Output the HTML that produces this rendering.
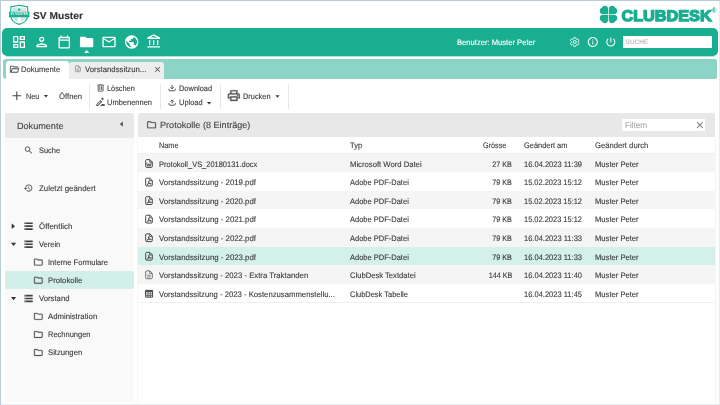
<!DOCTYPE html><html lang="de"><head><meta charset="utf-8"><title>SV Muster - ClubDesk</title><style>
html,body{margin:0;padding:0}
body{width:720px;height:405px;overflow:hidden;background:#fff;position:relative;font-family:"Liberation Sans",sans-serif}
#app{position:absolute;left:0;top:0;width:720px;height:405px;will-change:transform}
.b{position:absolute}
.t{position:absolute;white-space:nowrap;display:block;text-rendering:geometricPrecision;-webkit-text-stroke:0.12px currentColor}
.i{position:absolute;display:block;overflow:visible}

</style></head><body><div id="app">
<div class="b" style="left:0px;top:0px;width:720.00px;height:1.30px;background:#b9ccd5;"></div>
<div class="b" style="left:0px;top:0px;width:1.20px;height:405.00px;background:#b9ced8;"></div>
<div class="b" style="left:718.6px;top:1px;width:1.40px;height:404.00px;background:#e3eef0;"></div>
<div class="b" style="left:1px;top:403.7px;width:719.00px;height:1.30px;background:#e2eef1;"></div>
<svg class="i" style="left:8px;top:4px" width="24" height="23"><g transform="translate(0 0)">
<path d="M11.200 1.200 L19.650 2.900 V11.200 C19.650 15.700 16.300 18.900 11.200 20.400 C6.100 18.900 2.750 15.700 2.750 11.200 V2.900 Z" fill="#fff" stroke="#1aae91" stroke-width="1.100" stroke-linejoin="round"/>
<path d="M4.300 4.300 L9.700 3.200 V18.300 C6.400 17 4.300 14.500 4.300 11.200 Z" fill="#c5e9e0"/>
<path d="M12.700 3.200 L18.100 4.300 V11.200 C18.100 14.500 16 17 12.700 18.300 Z" fill="#e4e4e4"/>
<rect x="10.100" y="4.500" width="2.300" height="2.300" fill="#1aae91"/>
<path d="M.7 7.750 H21.700 L21.200 10.450 L21.700 13.150 H.7 L1.200 10.450 Z" fill="#1aae91"/>
<text x="11.200" y="11.400" font-size="2.600" font-weight="700" fill="#fff" fill-opacity=".92" text-anchor="middle" font-family="Liberation Sans, sans-serif" textLength="17.200" lengthAdjust="spacingAndGlyphs">SV MUSTER</text>
</g></svg>
<span class="t" style="font-size:10px;line-height:13px;top:10px;color:#333;font-weight:700;left:33.20px;transform-origin:0 50%;transform:scaleX(1.0204);">SV Muster</span>
<svg class="i" style="left:599px;top:5px" width="20" height="20" fill="#1aae91"><g transform="translate(9.5 9.4)">
<path id="lf" d="M-.35 -.35L-.35 -5.400C-.35 -7.600 -1.800 -8.750 -3.500 -8.750C-4.900 -8.750 -6.100 -8 -6.750 -6.750C-8 -6.100 -8.750 -4.900 -8.750 -3.500C-8.750 -1.800 -7.600 -.35 -5.400 -.35Z"/>
<path d="M-.35 -.35L-.35 -5.400C-.35 -7.600 -1.800 -8.750 -3.500 -8.750C-4.900 -8.750 -6.100 -8 -6.750 -6.750C-8 -6.100 -8.750 -4.900 -8.750 -3.500C-8.750 -1.800 -7.600 -.35 -5.400 -.35Z" transform="scale(-1 1)"/>
<path d="M-.35 -.35L-.35 -5.400C-.35 -7.600 -1.800 -8.750 -3.500 -8.750C-4.900 -8.750 -6.100 -8 -6.750 -6.750C-8 -6.100 -8.750 -4.900 -8.750 -3.500C-8.750 -1.800 -7.600 -.35 -5.400 -.35Z" transform="scale(1 -1)"/>
<path d="M-.35 -.35L-.35 -5.400C-.35 -7.600 -1.800 -8.750 -3.500 -8.750C-4.900 -8.750 -6.100 -8 -6.750 -6.750C-8 -6.100 -8.750 -4.900 -8.750 -3.500C-8.750 -1.800 -7.600 -.35 -5.400 -.35Z" transform="scale(-1 -1)"/>
</g></svg>
<svg class="i" style="left:618px;top:3px" width="103" height="23"><g transform="translate(0 0)"><text x="3.400" y="17.500" font-family="Liberation Sans, sans-serif" font-weight="700" font-size="15.500" fill="#1aae91" stroke="#1aae91" stroke-width="1.300" stroke-linejoin="miter" textLength="90.300" lengthAdjust="spacingAndGlyphs" style="text-rendering:geometricPrecision">CLUBDESK</text><text x="93.800" y="10.300" font-family="Liberation Sans, sans-serif" font-weight="700" font-size="6.500" fill="#1aae91">®</text></g></svg>
<div class="b" style="left:2.2px;top:28px;width:715.50px;height:28.20px;background:#1aae91;border-radius:5px;"></div>
<div class="b" style="left:6px;top:56px;width:708.00px;height:1.00px;background:rgba(26,174,145,.35);"></div>
<svg class="i" style="left:11px;top:34px" width="17" height="17" fill="#fff"><g transform="translate(0 0) scale(0.667)"><path d="M19 5v2h-4V5h4M9 5v6H5V5h4m10 8v6h-4v-6h4M9 17v2H5v-2h4M21 3h-8v6h8V3zM11 3H3v10h8V3zm10 8h-8v10h8V11zm-10 4H3v6h8v-6z"/></g></svg>
<svg class="i" style="left:33px;top:34px" width="18" height="17" fill="#fff"><g transform="translate(0.7 0) scale(0.667)"><path d="M12 6c1.1 0 2 .9 2 2s-.9 2-2 2-2-.9-2-2 .9-2 2-2m0 10c2.7 0 5.800 1.290 6 2H6c.23-.72 3.310-2 6-2m0-12C9.790 4 8 5.790 8 8s1.790 4 4 4 4-1.790 4-4-1.790-4-4-4zm0 10c-2.670 0-8 1.340-8 4v2h16v-2c0-2.660-5.330-4-8-4z"/></g></svg>
<svg class="i" style="left:56px;top:34px" width="17" height="17" fill="#fff"><g transform="translate(0.55 0.3) scale(0.642)"><path d="M5 22q-.825 0-1.413-.587Q3 20.825 3 20V6q0-.825.587-1.412Q4.175 4 5 4h1V2h2v2h8V2h2v2h1q.825 0 1.413.588Q21 5.175 21 6v14q0 .825-.587 1.413Q19.825 22 19 22Zm0-2h14V10H5v10ZM5 8h14V6H5Z"/></g></svg>
<svg class="i" style="left:78px;top:34px" width="18" height="17" fill="#fff"><g transform="translate(0.6 0) scale(0.667)"><path d="M10 4H4c-1.100 0-1.990.9-1.990 2L2 18c0 1.100.9 2 2 2h16c1.100 0 2-.9 2-2V8c0-1.100-.9-2-2-2h-8l-2-2z"/></g></svg>
<svg class="i" style="left:101px;top:34px" width="17" height="17" fill="#fff"><g transform="translate(0 0) scale(0.667)"><path d="M20 4H4c-1.100 0-1.990.9-1.990 2L2 18c0 1.100.9 2 2 2h16c1.100 0 2-.9 2-2V6c0-1.100-.9-2-2-2zm0 14H4V8l8 5 8-5v10zm-8-7L4 6h16l-8 5z"/></g></svg>
<svg class="i" style="left:123px;top:34px" width="18" height="17" fill="#fff"><g transform="translate(0.7 0) scale(0.667)"><path d="M12 2C6.480 2 2 6.480 2 12s4.480 10 10 10 10-4.480 10-10S17.520 2 12 2zm-1 17.930c-3.950-.49-7-3.850-7-7.930 0-.62.080-1.210.210-1.790L9 15v1c0 1.100.9 2 2 2v1.930zm6.900-2.540c-.26-.81-1-1.390-1.900-1.390h-1v-3c0-.55-.45-1-1-1H8v-2h2c.55 0 1-.45 1-1V7h2c1.100 0 2-.9 2-2v-.41c2.930 1.190 5 4.060 5 7.410 0 2.080-.8 3.970-2.100 5.390z"/></g></svg>
<svg class="i" style="left:146px;top:33px" width="17" height="18" fill="#fff"><g transform="translate(0 0.6) scale(0.667)"><path d="M6.500 10h-2v7h2v-7zm6 0h-2v7h2v-7zm8.500 9H2v2h19v-2zm-2.500-9h-2v7h2v-7zm-7-6.740L16.710 6H6.290l5.210-2.740m0-2.260L2 6v2h19V6l-9.500-5z"/></g></svg>
<svg class="i" style="left:84px;top:50px" width="7" height="4"><g transform="translate(0.2 0)"><path d="M0 3 L2.500 0 L5 3Z" fill="#fff"/></g></svg>
<span class="t" style="font-size:8px;line-height:10px;top:38px;color:#fff;left:456.70px;transform-origin:0 50%;transform:scaleX(0.9519);">Benutzer: Muster Peter</span>
<svg class="i" style="left:568px;top:36px" width="14" height="13" fill="#fff"><g transform="translate(0.7 0) scale(0.5)"><path d="M19.430 12.980c.04-.32.070-.64.070-.98 0-.34-.03-.66-.07-.98l2.110-1.650c.19-.15.240-.42.120-.64l-2-3.460c-.09-.16-.26-.25-.44-.25-.06 0-.12.010-.17.030l-2.490 1c-.52-.4-1.080-.73-1.690-.98l-.38-2.650C14.460 2.180 14.250 2 14 2h-4c-.25 0-.46.180-.49.420l-.38 2.650c-.61.250-1.170.590-1.690.980l-2.490-1c-.06-.02-.12-.03-.18-.03-.17 0-.34.090-.43.250l-2 3.460c-.13.220-.07.490.12.640l2.110 1.650c-.04.320-.07.650-.07.980 0 .33.030.66.070.98l-2.110 1.650c-.19.150-.24.420-.12.640l2 3.460c.09.160.26.250.44.250.06 0 .12-.01.17-.03l2.490-1c.52.4 1.080.73 1.690.98l.38 2.650c.03.240.24.420.49.420h4c.25 0 .46-.18.490-.42l.38-2.650c.61-.25 1.170-.59 1.690-.98l2.490 1c.06.020.12.030.18.030.17 0 .34-.09.43-.25l2-3.460c.12-.22.070-.49-.12-.64l-2.110-1.650z" fill="none" stroke="#fff" stroke-width="1.900" transform="translate(12 12) scale(.88) translate(-12 -12)"/><circle cx="12" cy="12" r="3" fill="none" stroke="#fff" stroke-width="1.900"/></g></svg>
<svg class="i" style="left:586px;top:36px" width="14" height="13" fill="#fff"><g transform="translate(0.8 0) scale(0.5)"><path d="M11 7h2v2h-2zm0 4h2v6h-2zm1-9C6.480 2 2 6.480 2 12s4.480 10 10 10 10-4.480 10-10S17.520 2 12 2zm0 18c-4.410 0-8-3.590-8-8s3.590-8 8-8 8 3.590 8 8-3.590 8-8 8z"/></g></svg>
<svg class="i" style="left:604px;top:36px" width="14" height="13" fill="#fff"><g transform="translate(0.8 0) scale(0.5)"><path d="M13 3h-2v10h2V3zm4.830 2.170l-1.420 1.420C17.990 7.860 19 9.810 19 12c0 3.870-3.130 7-7 7s-7-3.130-7-7c0-2.190 1.010-4.140 2.580-5.420L6.170 5.170C4.230 6.820 3 9.260 3 12c0 4.970 4.030 9 9 9s9-4.030 9-9c0-2.740-1.230-5.180-3.170-6.830z"/></g></svg>
<div class="b" style="left:623px;top:35.6px;width:89.00px;height:12.80px;background:#fff;"></div>
<span class="t" style="font-size:6.5px;line-height:8px;top:39px;color:#b5b5b5;left:625.60px;transform-origin:0 50%;">SUCHE</span>
<div class="b" style="left:3px;top:58.8px;width:714.00px;height:20.10px;background:#8cd4c5;border-radius:3px 2px 2px 3px;"></div>
<div class="b" style="left:5.6px;top:61px;width:63.40px;height:18.20px;background:#fff;border-radius:3px 3px 0 0;"></div>
<div class="b" style="left:69.3px;top:61.8px;width:94.50px;height:17.00px;background:#ededed;border-radius:3px 3px 0 0;"></div>
<svg class="i" style="left:9px;top:63px" width="12" height="13" fill="#555" stroke="#555" stroke-width="0.15" stroke-linejoin="round"><g transform="translate(0.05 0.95) scale(0.438)"><path d="M4 20q-.825 0-1.412-.587Q2 18.825 2 18V6q0-.825.588-1.412Q3.175 4 4 4h6l2 2h8q.825 0 1.413.588Q22 7.175 22 8H11.175l-2-2H4v12l2.400-8h17.100l-2.575 8.575q-.2.650-.737 1.038Q19.650 20 19 20Zm2.100-2H19l1.800-6H7.900Z"/></g></svg>
<span class="t" style="font-size:8px;line-height:10px;top:65px;color:#3a3a3a;left:20.90px;transform-origin:0 50%;transform:scaleX(0.9582);">Dokumente</span>
<svg class="i" style="left:75px;top:65px" width="7" height="9" stroke="#8a8a8a"><g transform="translate(0 0.3) scale(0.753 0.773)"><path d="M1.600 .5H4.800L7.200 2.900V7.300a1 1 0 0 1-1 1H1.600a1 1 0 0 1-1-1V1.500a1 1 0 0 1 1-1Z" fill="none" stroke-width="1"/><path d="M4.600 .7V3.100H7M2.100 4.800H5.600M2.100 6.500H5.600" fill="none" stroke-width=".9"/></g></svg>
<span class="t" style="font-size:8px;line-height:10px;top:65px;color:#3a3a3a;left:85.00px;transform-origin:0 50%;transform:scaleX(0.9708);">Vorstandssitzun...</span>
<svg class="i" style="left:153px;top:65px" width="10" height="10" fill="#444"><g transform="translate(0.1 0) scale(0.367)"><path d="M19 6.410L17.590 5 12 10.590 6.410 5 5 6.410 10.590 12 5 17.590 6.410 19 12 13.410 17.590 19 19 17.590 13.410 12z"/></g></svg>
<div class="b" style="left:89.3px;top:83.5px;width:1.00px;height:25.80px;background:#e6e6e6;"></div>
<div class="b" style="left:160.0px;top:83.5px;width:1.00px;height:25.80px;background:#e6e6e6;"></div>
<div class="b" style="left:219.7px;top:83.5px;width:1.00px;height:25.80px;background:#e6e6e6;"></div>
<div class="b" style="left:288.4px;top:83.5px;width:1.00px;height:25.80px;background:#e6e6e6;"></div>
<svg class="i" style="left:12px;top:91px" width="11" height="11"><g transform="translate(0.5 0.5)"><path d="M4.300 0V8.600M0 4.300H8.600" stroke="#444" stroke-width="1.100" fill="none"/></g></svg>
<span class="t" style="font-size:8px;line-height:10px;top:92px;color:#3a3a3a;left:25.70px;transform-origin:0 50%;transform:scaleX(0.8994);">Neu</span>
<svg class="i" style="left:43px;top:94px" width="6" height="5"><g transform="translate(0.8 0.9)"><path d="M0 0H4.2L2.1 2.6Z" fill="#3a3a3a"/></g></svg>
<span class="t" style="font-size:8px;line-height:10px;top:92px;color:#3a3a3a;left:59.00px;transform-origin:0 50%;transform:scaleX(0.9635);">Öffnen</span>
<svg class="i" style="left:95px;top:83px" width="12" height="11" fill="#555" stroke="#555" stroke-width="0.2" stroke-linejoin="round"><g transform="translate(0.7 0) scale(0.408)"><path d="M7 21q-.825 0-1.412-.587Q5 19.825 5 19V6H4V4h5V3h6v1h5v2h-1v13q0 .825-.587 1.413Q17.825 21 17 21ZM17 6H7v13h10ZM9 17h2V8H9Zm4 0h2V8h-2Z"/></g></svg>
<span class="t" style="font-size:8px;line-height:10px;top:84px;color:#3a3a3a;left:107.10px;transform-origin:0 50%;transform:scaleX(0.9191);">Löschen</span>
<svg class="i" style="left:94px;top:96px" width="14" height="13" fill="#555"><g transform="translate(0.9 0.6) scale(0.467)"><path d="M15 16l-4 4h10v-4h-6zm-2.940-8.810L3 16.250V20h3.750l9.060-9.060-3.750-3.750zM5.920 18H5v-.92l7.060-7.060.92.920L5.920 18zm12.790-11.960a.996.996 0 000-1.410l-2.340-2.340a1.001 1.001 0 00-1.410 0l-1.830 1.830 3.750 3.750 1.830-1.830z"/></g></svg>
<span class="t" style="font-size:8px;line-height:10px;top:98px;color:#3a3a3a;left:107.10px;transform-origin:0 50%;transform:scaleX(0.9368);">Umbenennen</span>
<svg class="i" style="left:168px;top:85px" width="9" height="8" fill="none" stroke="#505050" stroke-width=".95" stroke-linejoin="round"><g transform="translate(0.5 0)"><path d="M3.650 0V3.700M1.850 2.100L3.650 3.900L5.450 2.100M.5 3.700V4.800a1 1 0 0 0 1 1H5.800a1 1 0 0 0 1-1V3.700"/></g></svg>
<span class="t" style="font-size:8px;line-height:10px;top:84px;color:#3a3a3a;left:178.80px;transform-origin:0 50%;transform:scaleX(0.9303);">Download</span>
<svg class="i" style="left:168px;top:99px" width="9" height="8" fill="none" stroke="#505050" stroke-width=".95" stroke-linejoin="round"><g transform="translate(0.5 0.4)"><path d="M3.650 .6V4.200M1.850 2.300L3.650 .5L5.450 2.300M.5 3.700V4.800a1 1 0 0 0 1 1H5.800a1 1 0 0 0 1-1V3.700"/></g></svg>
<span class="t" style="font-size:8px;line-height:10px;top:98px;color:#3a3a3a;left:178.80px;transform-origin:0 50%;transform:scaleX(0.9309);">Upload</span>
<svg class="i" style="left:207px;top:102px" width="6" height="4"><g transform="translate(0 0)"><path d="M0 0H4.2L2.1 2.6Z" fill="#3a3a3a"/></g></svg>
<svg class="i" style="left:226px;top:88px" width="17" height="16" fill="#555" stroke="#555" stroke-width="0.4" stroke-linejoin="round"><g transform="translate(0.6 0.35) scale(0.604)"><path d="M19 8h-1V3H6v5H5c-1.660 0-3 1.340-3 3v6h4v4h12v-4h4v-6c0-1.660-1.340-3-3-3zM8 5h8v3H8V5zm8 12v2H8v-4h8v2zm2-2v-2H6v2H4v-4c0-.55.450-1 1-1h14c.55 0 1 .450 1 1v4h-2z"/><circle cx="18" cy="11.500" r="1"/></g></svg>
<span class="t" style="font-size:8px;line-height:10px;top:92px;color:#3a3a3a;left:242.90px;transform-origin:0 50%;transform:scaleX(0.9231);">Drucken</span>
<svg class="i" style="left:275px;top:95px" width="6" height="4"><g transform="translate(0.4 0.2)"><path d="M0 0H4.2L2.1 2.6Z" fill="#3a3a3a"/></g></svg>
<div class="b" style="left:5.3px;top:113.3px;width:128.70px;height:289.00px;background:#f9f9f9;border-radius:2px 2px 0 0;"></div>
<div class="b" style="left:5.3px;top:113.3px;width:128.70px;height:24.30px;background:#e8e8e8;border-radius:2px;"></div>
<span class="t" style="font-size:9px;line-height:11px;top:121px;color:#444;left:17.30px;transform-origin:0 50%;transform:scaleX(1.0103);">Dokumente</span>
<svg class="i" style="left:119px;top:121px" width="5" height="7"><g transform="translate(0.9 0.4)"><path d="M2.900 0V5.300L0 2.650Z" fill="#505050"/></g></svg>
<svg class="i" style="left:23px;top:145px" width="12" height="11" fill="#555" stroke="#555" stroke-width="0.3" stroke-linejoin="round"><g transform="translate(0.7 0.2) scale(0.408)"><path d="M15.500 14h-.79l-.28-.27C15.410 12.590 16 11.110 16 9.500 16 5.910 13.090 3 9.500 3S3 5.910 3 9.500 5.910 16 9.500 16c1.610 0 3.090-.59 4.230-1.570l.27.28v.79l5 4.990L20.490 19l-4.990-5zm-6 0C7.010 14 5 11.990 5 9.500S7.010 5 9.500 5 14 7.010 14 9.500 11.990 14 9.500 14z"/></g></svg>
<span class="t" style="font-size:8px;line-height:10px;top:146px;color:#3a3a3a;left:38.90px;transform-origin:0 50%;transform:scaleX(0.9302);">Suche</span>
<svg class="i" style="left:23px;top:183px" width="12" height="11" fill="#555" stroke="#555" stroke-width="0.3" stroke-linejoin="round"><g transform="translate(0.7 0.4) scale(0.392)"><path d="M13 3c-4.970 0-9 4.030-9 9H1l3.890 3.890.07.14L9 12H6c0-3.870 3.130-7 7-7s7 3.130 7 7-3.130 7-7 7c-1.930 0-3.680-.79-4.940-2.060l-1.420 1.420C8.270 19.990 10.510 21 13 21c4.970 0 9-4.030 9-9s-4.030-9-9-9zm-1 5v5l4.280 2.540.72-1.210-3.500-2.080V8H12z"/></g></svg>
<span class="t" style="font-size:8px;line-height:10px;top:184px;color:#3a3a3a;left:38.90px;transform-origin:0 50%;transform:scaleX(0.9807);">Zuletzt geändert</span>
<svg class="i" style="left:11px;top:223px" width="5" height="7"><g transform="translate(0.7 0.6)"><path d="M0 0V5.300L3.300 2.650Z" fill="#333"/></g></svg>
<svg class="i" style="left:24px;top:222px" width="10" height="10" fill="#404040"><g transform="translate(0.4 0.4)"><path d="M0 0H8.300V1.700H0ZM0 2.950H8.300V4.650H0ZM0 5.900H8.300V7.600H0Z"/><path d="M.8 .5H1.600V1.200H.8ZM.8 3.450H1.600V4.150H.8ZM.8 6.400H1.600V7.100H.8Z" fill="#ddd"/></g></svg>
<span class="t" style="font-size:8px;line-height:10px;top:222px;color:#3a3a3a;left:38.90px;transform-origin:0 50%;transform:scaleX(0.9896);">Öffentlich</span>
<svg class="i" style="left:10px;top:242px" width="8" height="6"><g transform="translate(0.95 0.87)"><path d="M0 0H5.2L2.6 3.2Z" fill="#333"/></g></svg>
<svg class="i" style="left:24px;top:240px" width="10" height="10" fill="#404040"><g transform="translate(0.4 0.47)"><path d="M0 0H8.300V1.700H0ZM0 2.950H8.300V4.650H0ZM0 5.900H8.300V7.600H0Z"/><path d="M.8 .5H1.600V1.200H.8ZM.8 3.450H1.600V4.150H.8ZM.8 6.400H1.600V7.100H.8Z" fill="#ddd"/></g></svg>
<span class="t" style="font-size:8px;line-height:10px;top:240px;color:#3a3a3a;left:38.90px;transform-origin:0 50%;transform:scaleX(0.9345);">Verein</span>
<svg class="i" style="left:33px;top:256px" width="12" height="13" fill="#555" stroke="#555" stroke-width="0.5" stroke-linejoin="round"><g transform="translate(0.1 0.94) scale(0.433)"><path d="M9.170 6l2 2H20v10H4V6h5.170M10 4H4c-1.100 0-1.990.9-1.990 2L2 18c0 1.100.9 2 2 2h16c1.100 0 2-.9 2-2V8c0-1.100-.9-2-2-2h-8l-2-2z"/></g></svg>
<span class="t" style="font-size:8px;line-height:10px;top:258px;color:#3a3a3a;left:48.40px;transform-origin:0 50%;transform:scaleX(0.9436);">Interne Formulare</span>
<div class="b" style="left:5.2px;top:271.21px;width:129.10px;height:17.70px;background:#d2efea;border-radius:2px;"></div>
<svg class="i" style="left:33px;top:275px" width="12" height="12" fill="#555" stroke="#555" stroke-width="0.5" stroke-linejoin="round"><g transform="translate(0.1 0.01) scale(0.433)"><path d="M9.170 6l2 2H20v10H4V6h5.170M10 4H4c-1.100 0-1.990.9-1.990 2L2 18c0 1.100.9 2 2 2h16c1.100 0 2-.9 2-2V8c0-1.100-.9-2-2-2h-8l-2-2z"/></g></svg>
<span class="t" style="font-size:8px;line-height:10px;top:276px;color:#3a3a3a;left:48.40px;transform-origin:0 50%;transform:scaleX(0.9613);">Protokolle</span>
<svg class="i" style="left:10px;top:297px" width="8" height="5"><g transform="translate(0.95 0.08)"><path d="M0 0H5.2L2.6 3.2Z" fill="#333"/></g></svg>
<svg class="i" style="left:24px;top:294px" width="10" height="10" fill="#404040"><g transform="translate(0.4 0.68)"><path d="M0 0H8.300V1.700H0ZM0 2.950H8.300V4.650H0ZM0 5.900H8.300V7.600H0Z"/><path d="M.8 .5H1.600V1.200H.8ZM.8 3.450H1.600V4.150H.8ZM.8 6.400H1.600V7.100H.8Z" fill="#ddd"/></g></svg>
<span class="t" style="font-size:8px;line-height:10px;top:294px;color:#3a3a3a;left:38.90px;transform-origin:0 50%;transform:scaleX(0.9658);">Vorstand</span>
<svg class="i" style="left:33px;top:311px" width="12" height="12" fill="#555" stroke="#555" stroke-width="0.5" stroke-linejoin="round"><g transform="translate(0.1 0.15) scale(0.433)"><path d="M9.170 6l2 2H20v10H4V6h5.170M10 4H4c-1.100 0-1.990.9-1.990 2L2 18c0 1.100.9 2 2 2h16c1.100 0 2-.9 2-2V8c0-1.100-.9-2-2-2h-8l-2-2z"/></g></svg>
<span class="t" style="font-size:8px;line-height:10px;top:312px;color:#3a3a3a;left:48.40px;transform-origin:0 50%;transform:scaleX(0.9706);">Administration</span>
<svg class="i" style="left:33px;top:329px" width="12" height="12" fill="#555" stroke="#555" stroke-width="0.5" stroke-linejoin="round"><g transform="translate(0.1 0.22) scale(0.433)"><path d="M9.170 6l2 2H20v10H4V6h5.170M10 4H4c-1.100 0-1.990.9-1.990 2L2 18c0 1.100.9 2 2 2h16c1.100 0 2-.9 2-2V8c0-1.100-.9-2-2-2h-8l-2-2z"/></g></svg>
<span class="t" style="font-size:8px;line-height:10px;top:330px;color:#3a3a3a;left:48.40px;transform-origin:0 50%;transform:scaleX(0.9367);">Rechnungen</span>
<svg class="i" style="left:33px;top:347px" width="12" height="12" fill="#555" stroke="#555" stroke-width="0.5" stroke-linejoin="round"><g transform="translate(0.1 0.29) scale(0.433)"><path d="M9.170 6l2 2H20v10H4V6h5.170M10 4H4c-1.100 0-1.990.9-1.990 2L2 18c0 1.100.9 2 2 2h16c1.100 0 2-.9 2-2V8c0-1.100-.9-2-2-2h-8l-2-2z"/></g></svg>
<span class="t" style="font-size:8px;line-height:10px;top:348px;color:#3a3a3a;left:48.40px;transform-origin:0 50%;transform:scaleX(0.9611);">Sitzungen</span>
<div class="b" style="left:137.7px;top:113.3px;width:577.20px;height:23.70px;background:#e8e8e8;border-radius:2px 2px 0 0;"></div>
<svg class="i" style="left:146px;top:119px" width="12" height="13" fill="#555" stroke="#555" stroke-width="0.5" stroke-linejoin="round"><g transform="translate(0.3 0.5) scale(0.442)"><path d="M9.170 6l2 2H20v10H4V6h5.170M10 4H4c-1.100 0-1.990.9-1.990 2L2 18c0 1.100.9 2 2 2h16c1.100 0 2-.9 2-2V8c0-1.100-.9-2-2-2h-8l-2-2z"/></g></svg>
<span class="t" style="font-size:9px;line-height:11px;top:120px;color:#444;left:160.00px;transform-origin:0 50%;transform:scaleX(1.0095);">Protokolle (8 Einträge)</span>
<div class="b" style="left:621.8px;top:119.3px;width:83.70px;height:11.70px;background:#fff;"></div>
<span class="t" style="font-size:8.5px;line-height:11px;top:120px;color:#aaa;left:624.70px;transform-origin:0 50%;transform:scaleX(0.9442);">Filtern</span>
<svg class="i" style="left:694px;top:119px" width="13" height="13" fill="#777"><g transform="translate(0.45 0.6) scale(0.45)"><path d="M19 6.410L17.590 5 12 10.590 6.410 5 5 6.410 10.590 12 5 17.590 6.410 19 12 13.410 17.590 19 19 17.590 13.410 12z"/></g></svg>
<span class="t" style="font-size:8px;line-height:10px;top:141px;color:#3a3a3a;left:159.30px;transform-origin:0 50%;transform:scaleX(0.9138);">Name</span>
<span class="t" style="font-size:8px;line-height:10px;top:141px;color:#3a3a3a;left:349.70px;transform-origin:0 50%;transform:scaleX(0.9383);">Typ</span>
<span class="t" style="font-size:8px;line-height:10px;top:141px;color:#3a3a3a;left:483.00px;transform-origin:0 50%;transform:scaleX(0.9075);">Grösse</span>
<span class="t" style="font-size:8px;line-height:10px;top:141px;color:#3a3a3a;left:523.90px;transform-origin:0 50%;transform:scaleX(0.9295);">Geändert am</span>
<span class="t" style="font-size:8px;line-height:10px;top:141px;color:#3a3a3a;left:595.20px;transform-origin:0 50%;transform:scaleX(0.9588);">Geändert durch</span>
<div class="b" style="left:137.7px;top:152.9px;width:577.20px;height:0.90px;background:#efefef;"></div>
<div class="b" style="left:137.7px;top:153.8px;width:577.20px;height:18.55px;background:#f5f5f5;"></div>
<svg class="i" style="left:145px;top:159px" width="9" height="10" stroke="#484848"><g transform="translate(0.1 0.1)"><path d="M1.600 .5H4.800L7.200 2.900V7.300a1 1 0 0 1-1 1H1.600a1 1 0 0 1-1-1V1.500a1 1 0 0 1 1-1Z" fill="none" stroke-width="1" stroke-linejoin="round"/><path d="M4.600 .7V3.100H7" fill="none" stroke-width=".9" stroke-linejoin="round"/><path d="M1.750 4.300L2.700 7.200L3.850 4.700L5 7.200L5.950 4.300" fill="none" stroke-width=".95" stroke-linejoin="round" stroke-linecap="round"/></g></svg>
<span class="t" style="font-size:8px;line-height:10px;top:160px;color:#3a3a3a;left:159.30px;transform-origin:0 50%;transform:scaleX(0.9325);">Protokoll_VS_20180131.docx</span>
<span class="t" style="font-size:8px;line-height:10px;top:160px;color:#3a3a3a;left:349.70px;transform-origin:0 50%;transform:scaleX(0.9606);">Microsoft Word Datei</span>
<span class="t" style="font-size:8px;line-height:10px;top:160px;color:#3a3a3a;right:207.80px;transform-origin:100% 50%;transform:scaleX(0.9000);">27 KB</span>
<span class="t" style="font-size:8px;line-height:10px;top:160px;color:#3a3a3a;left:523.90px;transform-origin:0 50%;transform:scaleX(0.9402);">16.04.2023 11:39</span>
<span class="t" style="font-size:8px;line-height:10px;top:160px;color:#3a3a3a;left:595.20px;transform-origin:0 50%;transform:scaleX(0.9521);">Muster Peter</span>
<svg class="i" style="left:145px;top:177px" width="9" height="11" stroke="#484848"><g transform="translate(0.1 0.65)"><path d="M1.600 .5H4.800L7.200 2.900V7.300a1 1 0 0 1-1 1H1.600a1 1 0 0 1-1-1V1.500a1 1 0 0 1 1-1Z" fill="none" stroke-width="1" stroke-linejoin="round"/><path d="M4.600 .7V3.100H7" fill="none" stroke-width=".9" stroke-linejoin="round"/><path d="M1.800 7.400C3.200 6.600 3.950 5.200 3.950 3.900C3.950 3.150 3.250 3.150 3.350 4C3.550 5.400 4.800 6.600 6.100 6.450M2.500 6.400C3.600 5.850 4.700 5.750 5.700 5.900" fill="none" stroke-width=".9" stroke-linecap="round"/></g></svg>
<span class="t" style="font-size:8px;line-height:10px;top:178px;color:#3a3a3a;left:159.30px;transform-origin:0 50%;transform:scaleX(0.9780);">Vorstandssitzung - 2019.pdf</span>
<span class="t" style="font-size:8px;line-height:10px;top:178px;color:#3a3a3a;left:349.70px;transform-origin:0 50%;transform:scaleX(0.9378);">Adobe PDF-Datei</span>
<span class="t" style="font-size:8px;line-height:10px;top:178px;color:#3a3a3a;right:207.80px;transform-origin:100% 50%;transform:scaleX(0.9000);">79 KB</span>
<span class="t" style="font-size:8px;line-height:10px;top:178px;color:#3a3a3a;left:523.90px;transform-origin:0 50%;transform:scaleX(0.9312);">15.02.2023 15:12</span>
<span class="t" style="font-size:8px;line-height:10px;top:178px;color:#3a3a3a;left:595.20px;transform-origin:0 50%;transform:scaleX(0.9521);">Muster Peter</span>
<div class="b" style="left:137.7px;top:190.9px;width:577.20px;height:18.55px;background:#f5f5f5;"></div>
<svg class="i" style="left:145px;top:196px" width="9" height="10" stroke="#484848"><g transform="translate(0.1 0.2)"><path d="M1.600 .5H4.800L7.200 2.900V7.300a1 1 0 0 1-1 1H1.600a1 1 0 0 1-1-1V1.500a1 1 0 0 1 1-1Z" fill="none" stroke-width="1" stroke-linejoin="round"/><path d="M4.600 .7V3.100H7" fill="none" stroke-width=".9" stroke-linejoin="round"/><path d="M1.800 7.400C3.200 6.600 3.950 5.200 3.950 3.900C3.950 3.150 3.250 3.150 3.350 4C3.550 5.400 4.800 6.600 6.100 6.450M2.500 6.400C3.600 5.850 4.700 5.750 5.700 5.900" fill="none" stroke-width=".9" stroke-linecap="round"/></g></svg>
<span class="t" style="font-size:8px;line-height:10px;top:197px;color:#3a3a3a;left:159.30px;transform-origin:0 50%;transform:scaleX(0.9780);">Vorstandssitzung - 2020.pdf</span>
<span class="t" style="font-size:8px;line-height:10px;top:197px;color:#3a3a3a;left:349.70px;transform-origin:0 50%;transform:scaleX(0.9378);">Adobe PDF-Datei</span>
<span class="t" style="font-size:8px;line-height:10px;top:197px;color:#3a3a3a;right:207.80px;transform-origin:100% 50%;transform:scaleX(0.9000);">79 KB</span>
<span class="t" style="font-size:8px;line-height:10px;top:197px;color:#3a3a3a;left:523.90px;transform-origin:0 50%;transform:scaleX(0.9312);">15.02.2023 15:12</span>
<span class="t" style="font-size:8px;line-height:10px;top:197px;color:#3a3a3a;left:595.20px;transform-origin:0 50%;transform:scaleX(0.9521);">Muster Peter</span>
<svg class="i" style="left:145px;top:214px" width="9" height="11" stroke="#484848"><g transform="translate(0.1 0.75)"><path d="M1.600 .5H4.800L7.200 2.900V7.300a1 1 0 0 1-1 1H1.600a1 1 0 0 1-1-1V1.500a1 1 0 0 1 1-1Z" fill="none" stroke-width="1" stroke-linejoin="round"/><path d="M4.600 .7V3.100H7" fill="none" stroke-width=".9" stroke-linejoin="round"/><path d="M1.800 7.400C3.200 6.600 3.950 5.200 3.950 3.900C3.950 3.150 3.250 3.150 3.350 4C3.550 5.400 4.800 6.600 6.100 6.450M2.500 6.400C3.600 5.850 4.700 5.750 5.700 5.900" fill="none" stroke-width=".9" stroke-linecap="round"/></g></svg>
<span class="t" style="font-size:8px;line-height:10px;top:215px;color:#3a3a3a;left:159.30px;transform-origin:0 50%;transform:scaleX(0.9780);">Vorstandssitzung - 2021.pdf</span>
<span class="t" style="font-size:8px;line-height:10px;top:215px;color:#3a3a3a;left:349.70px;transform-origin:0 50%;transform:scaleX(0.9378);">Adobe PDF-Datei</span>
<span class="t" style="font-size:8px;line-height:10px;top:215px;color:#3a3a3a;right:207.80px;transform-origin:100% 50%;transform:scaleX(0.9000);">79 KB</span>
<span class="t" style="font-size:8px;line-height:10px;top:215px;color:#3a3a3a;left:523.90px;transform-origin:0 50%;transform:scaleX(0.9312);">15.02.2023 15:12</span>
<span class="t" style="font-size:8px;line-height:10px;top:215px;color:#3a3a3a;left:595.20px;transform-origin:0 50%;transform:scaleX(0.9521);">Muster Peter</span>
<div class="b" style="left:137.7px;top:228.0px;width:577.20px;height:18.55px;background:#f5f5f5;"></div>
<svg class="i" style="left:145px;top:233px" width="9" height="11" stroke="#484848"><g transform="translate(0.1 0.3)"><path d="M1.600 .5H4.800L7.200 2.900V7.300a1 1 0 0 1-1 1H1.600a1 1 0 0 1-1-1V1.500a1 1 0 0 1 1-1Z" fill="none" stroke-width="1" stroke-linejoin="round"/><path d="M4.600 .7V3.100H7" fill="none" stroke-width=".9" stroke-linejoin="round"/><path d="M1.800 7.400C3.200 6.600 3.950 5.200 3.950 3.900C3.950 3.150 3.250 3.150 3.350 4C3.550 5.400 4.800 6.600 6.100 6.450M2.500 6.400C3.600 5.850 4.700 5.750 5.700 5.900" fill="none" stroke-width=".9" stroke-linecap="round"/></g></svg>
<span class="t" style="font-size:8px;line-height:10px;top:234px;color:#3a3a3a;left:159.30px;transform-origin:0 50%;transform:scaleX(0.9780);">Vorstandssitzung - 2022.pdf</span>
<span class="t" style="font-size:8px;line-height:10px;top:234px;color:#3a3a3a;left:349.70px;transform-origin:0 50%;transform:scaleX(0.9378);">Adobe PDF-Datei</span>
<span class="t" style="font-size:8px;line-height:10px;top:234px;color:#3a3a3a;right:207.80px;transform-origin:100% 50%;transform:scaleX(0.9000);">79 KB</span>
<span class="t" style="font-size:8px;line-height:10px;top:234px;color:#3a3a3a;left:523.90px;transform-origin:0 50%;transform:scaleX(0.9402);">16.04.2023 11:33</span>
<span class="t" style="font-size:8px;line-height:10px;top:234px;color:#3a3a3a;left:595.20px;transform-origin:0 50%;transform:scaleX(0.9521);">Muster Peter</span>
<div class="b" style="left:137.7px;top:246.55px;width:577.20px;height:18.55px;background:#d3f0eb;"></div>
<svg class="i" style="left:145px;top:251px" width="9" height="11" stroke="#484848"><g transform="translate(0.1 0.85)"><path d="M1.600 .5H4.800L7.200 2.900V7.300a1 1 0 0 1-1 1H1.600a1 1 0 0 1-1-1V1.500a1 1 0 0 1 1-1Z" fill="none" stroke-width="1" stroke-linejoin="round"/><path d="M4.600 .7V3.100H7" fill="none" stroke-width=".9" stroke-linejoin="round"/><path d="M1.800 7.400C3.200 6.600 3.950 5.200 3.950 3.900C3.950 3.150 3.250 3.150 3.350 4C3.550 5.400 4.800 6.600 6.100 6.450M2.500 6.400C3.600 5.850 4.700 5.750 5.700 5.900" fill="none" stroke-width=".9" stroke-linecap="round"/></g></svg>
<span class="t" style="font-size:8px;line-height:10px;top:253px;color:#3a3a3a;left:159.30px;transform-origin:0 50%;transform:scaleX(0.9780);">Vorstandssitzung - 2023.pdf</span>
<span class="t" style="font-size:8px;line-height:10px;top:253px;color:#3a3a3a;left:349.70px;transform-origin:0 50%;transform:scaleX(0.9378);">Adobe PDF-Datei</span>
<span class="t" style="font-size:8px;line-height:10px;top:253px;color:#3a3a3a;right:207.80px;transform-origin:100% 50%;transform:scaleX(0.9000);">79 KB</span>
<span class="t" style="font-size:8px;line-height:10px;top:253px;color:#3a3a3a;left:523.90px;transform-origin:0 50%;transform:scaleX(0.9402);">16.04.2023 11:33</span>
<span class="t" style="font-size:8px;line-height:10px;top:253px;color:#3a3a3a;left:595.20px;transform-origin:0 50%;transform:scaleX(0.9521);">Muster Peter</span>
<div class="b" style="left:137.7px;top:265.1px;width:577.20px;height:18.55px;background:#f5f5f5;"></div>
<svg class="i" style="left:145px;top:270px" width="9" height="11" stroke="#707070"><g transform="translate(0.1 0.4)"><path d="M1.600 .5H4.800L7.200 2.900V7.300a1 1 0 0 1-1 1H1.600a1 1 0 0 1-1-1V1.500a1 1 0 0 1 1-1Z" fill="none" stroke-width="1" stroke-linejoin="round"/><path d="M4.600 .7V3.100H7" fill="none" stroke-width=".9" stroke-linejoin="round"/><path d="M2.100 4.800H5.600M2.100 6.500H5.600" fill="none" stroke-width=".85"/></g></svg>
<span class="t" style="font-size:8px;line-height:10px;top:271px;color:#3a3a3a;left:159.30px;transform-origin:0 50%;transform:scaleX(0.9697);">Vorstandssitzung - 2023 - Extra Traktanden</span>
<span class="t" style="font-size:8px;line-height:10px;top:271px;color:#3a3a3a;left:349.70px;transform-origin:0 50%;transform:scaleX(0.9538);">ClubDesk Textdatei</span>
<span class="t" style="font-size:8px;line-height:10px;top:271px;color:#3a3a3a;right:207.80px;transform-origin:100% 50%;transform:scaleX(0.9000);">144 KB</span>
<span class="t" style="font-size:8px;line-height:10px;top:271px;color:#3a3a3a;left:523.90px;transform-origin:0 50%;transform:scaleX(0.9402);">16.04.2023 11:40</span>
<span class="t" style="font-size:8px;line-height:10px;top:271px;color:#3a3a3a;left:595.20px;transform-origin:0 50%;transform:scaleX(0.9521);">Muster Peter</span>
<svg class="i" style="left:145px;top:289px" width="10" height="10" stroke="#484848"><g transform="translate(0.1 0.85)"><path d="M.5 .5H7.500V7.300H.5Z" fill="none" stroke-width="1" stroke-linejoin="round"/><path d="M.5 1.500H7.500" stroke-width="1.600" fill="none"/><path d="M.5 4H7.500M.5 5.700H7.500M2.900 2V7.300M5.200 2V7.300" fill="none" stroke-width=".7"/></g></svg>
<span class="t" style="font-size:8px;line-height:10px;top:290px;color:#3a3a3a;left:159.30px;transform-origin:0 50%;transform:scaleX(0.9648);">Vorstandssitzung - 2023 - Kostenzusammenstellu...</span>
<span class="t" style="font-size:8px;line-height:10px;top:290px;color:#3a3a3a;left:349.70px;transform-origin:0 50%;transform:scaleX(0.9322);">ClubDesk Tabelle</span>
<span class="t" style="font-size:8px;line-height:10px;top:290px;color:#3a3a3a;left:523.90px;transform-origin:0 50%;transform:scaleX(0.9402);">16.04.2023 11:45</span>
<span class="t" style="font-size:8px;line-height:10px;top:290px;color:#3a3a3a;left:595.20px;transform-origin:0 50%;transform:scaleX(0.9521);">Muster Peter</span>
<div class="b" style="left:137.7px;top:302.20000000000005px;width:577.20px;height:0.90px;background:#f0f0f0;"></div>
<div class="b" style="left:137px;top:137px;width:1.00px;height:266.70px;background:#f5f5f5;"></div>
<div class="b" style="left:714.5px;top:137px;width:1.00px;height:266.70px;background:#f6f6f6;"></div>
</div></body></html>
